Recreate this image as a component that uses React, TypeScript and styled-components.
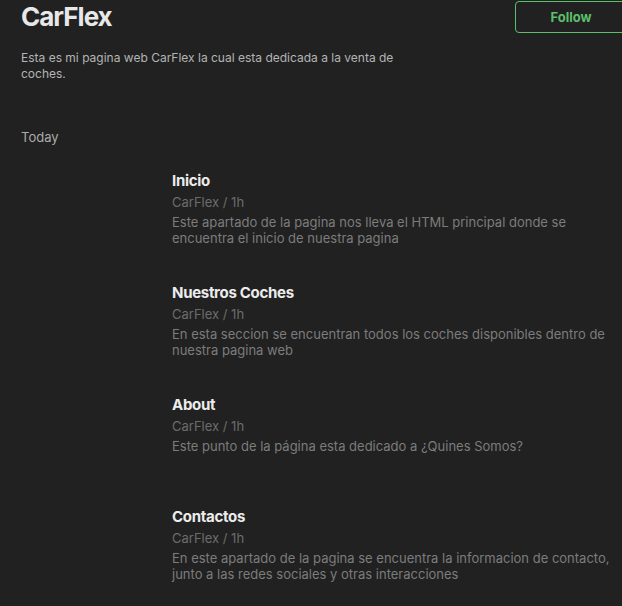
import React from "react";
import styled, { createGlobalStyle } from "styled-components";

const Global = createGlobalStyle`
  html, body {
    margin: 0;
    padding: 0;
    background: #212121;
    overflow: hidden;
  }
  body {
    font-family: Inter, "Noto Sans", sans-serif;
    color: #e6e6e6;
  }
`;

const Page = styled.div`
  padding: 0 0 0 21px;
  width: 606px;
`;

const Header = styled.header`
  display: flex;
  justify-content: space-between;
  align-items: flex-start;
`;

const Intro = styled.div`
  display: flex;
  flex-direction: column;
`;

const Title = styled.h1`
  margin: 0;
  padding-top: 1px;
  font-size: 26px;
  line-height: 32px;
  font-weight: 700;
  letter-spacing: -1px;
  color: #e8e8e8;
`;

const Description = styled.p`
  margin: 17px 0 0;
  max-width: 385px;
  font-size: 12px;
  line-height: 16px;
  color: #b4b4b4;
`;

const FollowButton = styled.button`
  margin-top: 1px;
  width: 112px;
  height: 32px;
  border: 1px solid #5cbf6a;
  border-radius: 4px;
  background: transparent;
  color: #5cbf6a;
  font-family: Inter, sans-serif;
  font-size: 13px;
  font-weight: 700;
  cursor: pointer;
`;

const SectionLabel = styled.div`
  margin-top: 47px;
  font-size: 13px;
  line-height: 16px;
  color: #ababab;
`;

const Feed = styled.ul`
  list-style: none;
  margin: 26px 0 0;
  padding: 0 0 0 151px;
  display: grid;
  grid-auto-rows: 112px;
`;

const Item = styled.li`
  display: flex;
  flex-direction: column;
`;

const ItemTitle = styled.h2`
  margin: 0;
  font-size: 15px;
  line-height: 20px;
  font-weight: 700;
  letter-spacing: -0.3px;
  color: #ececec;
`;

const Meta = styled.div`
  margin-top: 1px;
  font-size: 13px;
  line-height: 20px;
  color: #6c6c6c;
`;

const ItemText = styled.p`
  margin: 2px 0 0;
  max-width: 440px;
  font-size: 13px;
  line-height: 16px;
  color: #7c7c7c;
`;

const items = [
  {
    title: "Inicio",
    text: "Este apartado de la pagina nos lleva el HTML principal donde se encuentra el inicio de nuestra pagina",
  },
  {
    title: "Nuestros Coches",
    text: "En esta seccion se encuentran todos los coches disponibles dentro de nuestra pagina web",
  },
  {
    title: "About",
    text: "Este punto de la página esta dedicado a ¿Quines Somos?",
  },
  {
    title: "Contactos",
    text: "En este apartado de la pagina se encuentra la informacion de contacto, junto a las redes sociales y otras interacciones",
  },
];

export default function App() {
  return (
    <>
      <Global />
      <Page>
        <Header>
          <Intro>
            <Title>CarFlex</Title>
            <Description>
              Esta es mi pagina web CarFlex la cual esta dedicada a la venta de coches.
            </Description>
          </Intro>
          <FollowButton>Follow</FollowButton>
        </Header>
        <SectionLabel>Today</SectionLabel>
        <Feed>
          {items.map((it) => (
            <Item key={it.title}>
              <ItemTitle>{it.title}</ItemTitle>
              <Meta>CarFlex / 1h</Meta>
              <ItemText>{it.text}</ItemText>
            </Item>
          ))}
        </Feed>
      </Page>
    </>
  );
}
